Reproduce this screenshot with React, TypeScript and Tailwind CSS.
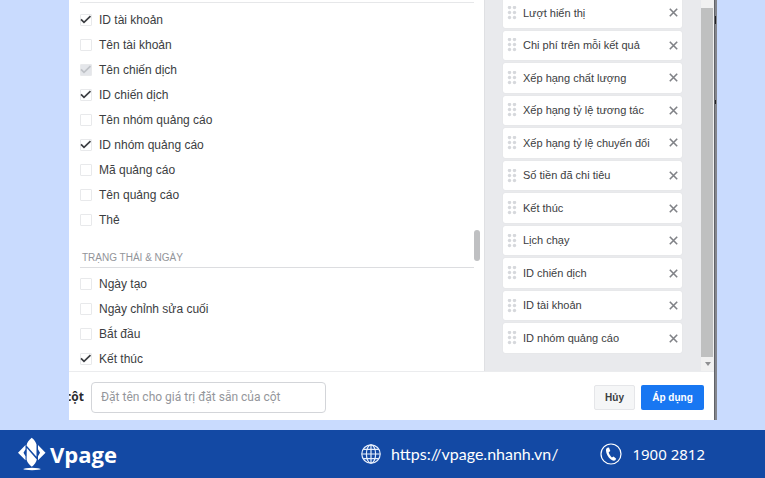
import { useState } from "react";

interface Field {
  id: string;
  label: string;
  checked?: boolean;
  disabled?: boolean;
}

const nameFields: Field[] = [
  { id: "account_id", label: "ID tài khoản", checked: true },
  { id: "account_name", label: "Tên tài khoản" },
  { id: "campaign_name", label: "Tên chiến dịch", checked: true, disabled: true },
  { id: "campaign_id", label: "ID chiến dịch", checked: true },
  { id: "adset_name", label: "Tên nhóm quảng cáo" },
  { id: "adset_id", label: "ID nhóm quảng cáo", checked: true },
  { id: "ad_id", label: "Mã quảng cáo" },
  { id: "ad_name", label: "Tên quảng cáo" },
  { id: "tag", label: "Thẻ" },
];

const dateFields: Field[] = [
  { id: "created", label: "Ngày tạo" },
  { id: "edited", label: "Ngày chỉnh sửa cuối" },
  { id: "start", label: "Bắt đầu" },
  { id: "end", label: "Kết thúc", checked: true },
];

const initialColumns = [
  "Lượt hiển thị",
  "Chi phí trên mỗi kết quả",
  "Xếp hạng chất lượng",
  "Xếp hạng tỷ lệ tương tác",
  "Xếp hạng tỷ lệ chuyển đổi",
  "Số tiền đã chi tiêu",
  "Kết thúc",
  "Lịch chạy",
  "ID chiến dịch",
  "ID tài khoản",
  "ID nhóm quảng cáo",
];

const FieldRow = ({ field }: { field: Field }) => (
  <li className="flex h-[25px] items-center">
    <label htmlFor={field.id} className="flex items-center gap-[7px]">
      <span className="grid">
        <input
          id={field.id}
          type="checkbox"
          defaultChecked={field.checked}
          disabled={field.disabled}
          className="peer col-start-1 row-start-1 size-3 appearance-none rounded-[1px] border border-[#e8e9eb] bg-white disabled:bg-[#e4e6ea]"
        />
        <svg
          viewBox="0 0 12 12"
          className="pointer-events-none invisible col-start-1 row-start-1 size-3 fill-none stroke-[#3c3e42] peer-checked:visible peer-disabled:stroke-[#bfc2c7]"
        >
          <path d="M1 5.3 4 8.3 10.5 2.1" strokeWidth="1.7" />
        </svg>
      </span>
      {field.label}
    </label>
  </li>
);

const GripIcon = () => (
  <svg width="10" height="14" viewBox="0 0 10 14" className="fill-[#d6d8dc]">
    {[1.5, 6.5, 11.5].map((y) => (
      <g key={y}>
        <circle cx="2.5" cy={y} r="1.7" />
        <circle cx="7.5" cy={y} r="1.7" />
      </g>
    ))}
  </svg>
);

const GlobeIcon = () => (
  <svg width="20" height="20" viewBox="0 0 20 20" fill="none" stroke="#e6eefb" strokeWidth="1.2">
    <circle cx="10" cy="10" r="9.2" />
    <ellipse cx="10" cy="10" rx="4.6" ry="9.2" />
    <path d="M10 .8v18.4M.8 10h18.4M2.3 5.4h15.4M2.3 14.6h15.4" />
  </svg>
);

const PhoneIcon = () => (
  <svg width="22" height="22" viewBox="0 0 22 22" fill="none">
    <circle cx="11" cy="11" r="10" stroke="#fff" strokeWidth="1.2" />
    <path
      d="M7.3 4.8 9 4.6l1.3 3.3-1.6 1.3c.4 2 1.6 3.9 3.2 5.2l1.7-.9 2.6 2.2-.9 1.5c-1.3.9-3.1.4-4.7-1-2.6-2.3-4.4-5.3-4.6-8.5C5.9 6.500 6.300 5.400 7.300 4.800Z"
      fill="#fff"
    />
  </svg>
);

const LogoIcon = () => (
  <svg width="28" height="34" viewBox="0 0 28 34" fill="#fff">
    <path d="M7.500 8 0 15.700l7.500 7.500v-4L5.500 15.700l2-3.500Z" />
    <path d="M20 8 27.500 15.700 20 23.200v-4l2-3.500-2-3.500Z" />
    <path d="M13.700.8c2.600 2 4.200 4.400 4.800 6.700v12.300L8.500 8.500c.5-2.800 2.600-5.700 5.200-7.700Z" />
    <path d="M8.800 11 18.800 22.500c-.6 2.800-2.500 5.300-5 7.200-2.500-1.900-4.500-4.500-5.200-7Z" />
    <ellipse cx="14" cy="32" rx="8.700" ry="1.200" />
  </svg>
);

const App = () => {
  const [columns, setColumns] = useState<string[]>(initialColumns);

  const removeColumn = (name: string) => {
    setColumns((prev) => prev.filter((c) => c !== name));
  };

  return (
    <div className="flex min-h-screen flex-col bg-[#c9dbfe] font-['Liberation_Sans',Arial,sans-serif] text-[#3b3d41]">
      <div className="mr-12 ml-[69px] flex bg-white">
        <div className="flex min-w-0 flex-1 flex-col">
          <main className="flex overflow-hidden border-b border-[#ebecee]">
            <section className="flex flex-1 text-[12px]">
              <div className="flex-1 pl-[11px]">
                <div className="h-[7px] pt-0.5">
                  <hr className="border-[#e6e7e9]" />
                </div>
                <ul>
                  {nameFields.map((f) => (
                    <FieldRow key={f.id} field={f} />
                  ))}
                </ul>
                <h2 className="mt-[18px] border-b border-[#dcdde0] pb-px pl-0.5 text-[10px] leading-4 text-[#929499]">
                  TRẠNG THÁI &amp; NGÀY
                </h2>
                <ul className="mt-[3px]">
                  {dateFields.map((f) => (
                    <FieldRow key={f.id} field={f} />
                  ))}
                </ul>
              </div>
              <div className="w-2.5 pt-[230px]">
                <div className="h-[31px] w-1.5 rounded-full bg-[#bfc0c2]" />
              </div>
            </section>

            <aside className="flex w-[230px] border-l border-[#dfe0e3] bg-[#e9eaed]">
              <ul className="-mt-0.5 mb-[18px] ml-[18px] flex w-[179px] flex-col gap-[3px] text-[11px]">
                {columns.map((name) => (
                  <li
                    key={name}
                    className="flex flex-1 items-center rounded-xs bg-white pr-1 pl-1 shadow-[0_0_1px_#d0d2d6]"
                  >
                    <GripIcon />
                    <span className="ml-1.5 flex-1">{name}</span>
                    <button type="button" aria-label={`Xóa ${name}`} onClick={() => removeColumn(name)}>
                      <svg width="9" height="9" viewBox="0 0 9 9" stroke="#808287" strokeWidth="1.6">
                        <path d="m.8.8 7.4 7.4M8.2.8.8 8.2" />
                      </svg>
                    </button>
                  </li>
                ))}
              </ul>
              <div className="ml-auto flex w-[13px] flex-col bg-[#f1f1f1] pt-2">
                <div className="mr-px flex-1 bg-[#bfc0c0]" />
                <div className="flex h-3.5 items-center justify-center">
                  <svg width="6" height="4" viewBox="0 0 6 4" fill="#8f9092">
                    <path d="M0 0h6L3 4Z" />
                  </svg>
                </div>
              </div>
            </aside>
          </main>

          <footer className="flex h-12 items-center pt-0.5 pr-2.5 font-['Open_Sans',sans-serif]">
            <label htmlFor="preset" className="flex w-[15px] justify-end overflow-hidden text-[12px] font-bold text-[#2a2b2e]">
              cột
            </label>
            <input
              id="preset"
              type="text"
              placeholder="Đặt tên cho giá trị đặt sẵn của cột"
              className="ml-[7px] h-[31px] w-[235px] rounded border border-[#d3d5d9] px-[9px] font-[Roboto,sans-serif] text-[12px] placeholder:text-[#94969b]"
            />
            <div className="ml-auto flex gap-1.5 font-['Liberation_Sans',Arial,sans-serif] text-[10px] font-bold">
              <button type="button" className="h-[25px] w-[41px] rounded-xs border border-[#e5e6e9] bg-[#f5f6f7]">
                Hủy
              </button>
              <button type="button" className="h-[25px] w-[63px] rounded-xs bg-[#1877f2] text-white">
                Áp dụng
              </button>
            </div>
          </footer>
        </div>
        {/* strip of the page behind the dialog */}
        <div className="flex w-[3px] flex-col gap-[76px] border-l border-[#606268] bg-[#84868d] pt-4">
          <div className="h-2 w-px bg-[#222326]" />
          <div className="h-1 w-px bg-[#222326]" />
        </div>
      </div>

      <div className="mt-2.5 flex flex-1 items-center bg-[#1349a4] pr-[60px] pl-[18px] text-white">
        <div className="flex items-center gap-1">
          <LogoIcon />
          <span className="font-['Open_Sans',sans-serif] text-[22px] leading-7 font-bold">Vpage</span>
        </div>
        <div className="ml-auto flex items-center gap-[42px]">
          <a
            href="https://vpage.nhanh.vn/"
            className="flex items-center gap-2.5 font-[Lato,sans-serif] text-[16px]"
          >
            <GlobeIcon />
            https://vpage.nhanh.vn/
          </a>
          <a href="tel:19002812" className="flex items-center gap-2.5 font-['Noto_Sans',sans-serif] text-[15px]">
            <PhoneIcon />
            1900 2812
          </a>
        </div>
      </div>
    </div>
  );
};

export default App;
